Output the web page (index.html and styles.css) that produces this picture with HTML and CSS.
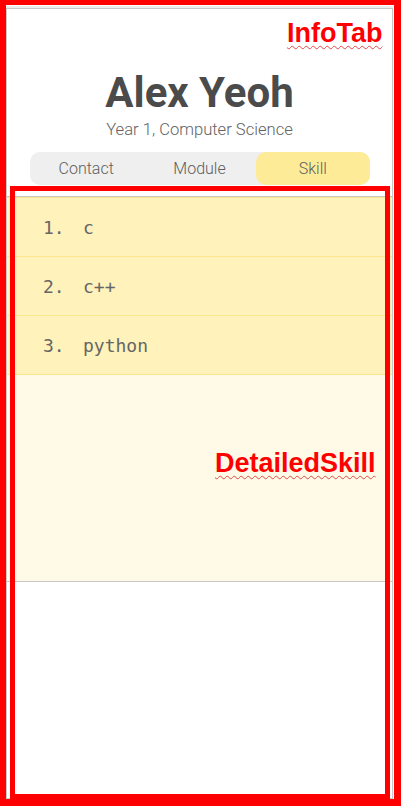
FILE: index.html
```html
<!DOCTYPE html>
<html>
<head>
<meta charset="utf-8">
<link rel="stylesheet" href="styles.css">
</head>
<body>
<div class="app">
  <div class="header">
    <div class="name">Alex Yeoh</div>
    <div class="subtitle">Year 1, Computer Science</div>
    <div class="tabs">
      <div class="tab">Contact</div>
      <div class="tab">Module</div>
      <div class="tab active">Skill</div>
    </div>
  </div>
  <div class="panel">
    <ol class="skills">
      <li class="skill"><span class="idx">1.</span><span>c</span></li>
      <li class="skill"><span class="idx">2.</span><span>c++</span></li>
      <li class="skill"><span class="idx">3.</span><span>python</span></li>
    </ol>
  </div>
</div>
<div class="annot annot-info"></div>
<div class="annot annot-detail"></div>
<div class="label label-info">InfoTab</div>
<div class="label label-detail">DetailedSkill</div>
</body>
</html>
```
FILE: styles.css
```css
html, body {
  margin: 0;
  padding: 0;
  background: #ffffff;
}
body {
  position: relative;
  width: 401px;
  height: 808px;
  overflow: hidden;
  font-family: Roboto, "Liberation Sans", sans-serif;
}
.app {
  margin: 8px 0 0 6px;
  width: 385px;
  height: 789px;
  border: 1px solid #c8c8c8;
  box-shadow: 0 -2px 0 #ececec;
  background: #ffffff;
  display: flex;
  flex-direction: column;
}
.header {
  padding-top: 63px;
  display: flex;
  flex-direction: column;
  align-items: center;
}
.name {
  font-size: 42px;
  line-height: 42px;
  font-weight: 700;
  color: #4b4b4b;
}
.subtitle {
  margin-top: 6px;
  font-size: 16.6px;
  line-height: 20px;
  font-weight: 300;
  color: #636363;
}
.tabs {
  margin-top: 12px;
  width: 340px;
  height: 33px;
  background: #efefef;
  border-radius: 10px;
  display: grid;
  grid-template-columns: 1fr 1fr 1fr;
}
.tab {
  display: flex;
  align-items: center;
  justify-content: center;
  font-size: 16px;
  font-weight: 300;
  color: #5e5e5e;
  border-radius: 10px;
}
.tab.active {
  background: #fdeb98;
}
.panel {
  margin-top: 11px;
  height: 384px;
  border-top: 1px solid #c8c8c8;
  border-bottom: 1px solid #c8c8c8;
  background: #fefae7;
}
.skills {
  list-style: none;
  margin: 0;
  padding: 0;
  border-bottom: 1px solid #fde68c;
}
.skill {
  height: 58px;
  border-top: 1px solid #fde68c;
  background: #fff2ba;
  display: flex;
  align-items: center;
  padding-left: 36px;
  font-family: "DejaVu Sans Mono", "Liberation Mono", monospace;
  font-size: 18px;
  color: #666666;
}
.idx {
  display: inline-block;
  width: 40px;
}
.annot {
  position: absolute;
  box-sizing: border-box;
  border: 5px solid #ff0000;
}
.annot-info {
  left: 0;
  top: 0;
  width: 401px;
  height: 806px;
  border-width: 5px 7px 7px 6px;
}
.annot-detail {
  left: 10px;
  top: 186px;
  width: 380px;
  height: 613px;
}
.label {
  position: absolute;
  font-family: "Liberation Sans", Arial, sans-serif;
  font-weight: 700;
  font-size: 27px;
  line-height: 27px;
  color: #ff0000;
  text-decoration: underline wavy #e04848;
  text-decoration-thickness: 1px;
  text-underline-offset: 3px;
}
.label-info {
  left: 287px;
  top: 20px;
}
.label-detail {
  left: 215px;
  top: 450px;
}
```
